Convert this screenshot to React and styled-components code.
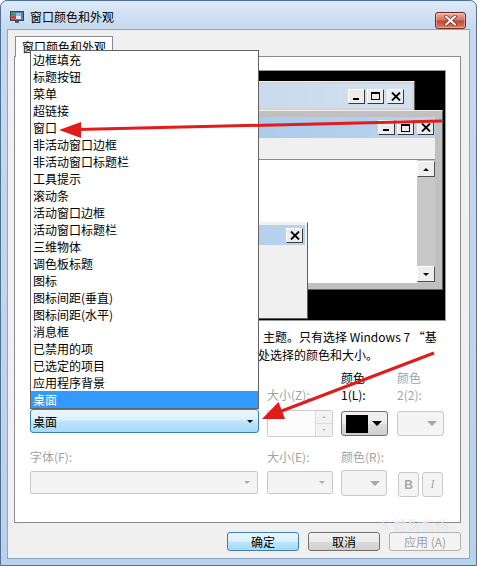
import React from 'react';
import styled, { createGlobalStyle } from 'styled-components';

const GlobalStyle = createGlobalStyle`
  html, body { margin: 0; padding: 0; background: #fff; }
  body {
    width: 477px; height: 566px; overflow: hidden;
    font-family: "Noto Sans CJK SC", "Noto Sans", "Liberation Sans", sans-serif;
    font-size: 12px; color: #000;
  }
`;

// outer aero frame
const Frame = styled.div`
  position: relative;
  width: 477px; height: 566px; box-sizing: border-box;
  border: 1px solid #4f6f95;
  border-radius: 7px 7px 0 0;
  background: linear-gradient(180deg, #dde9f6 0px, #c6daef 26px, #b9d1ea 100%);
  padding: 0 7px 7px;
  display: flex; flex-direction: column;
`;

const TitleBar = styled.div`
  height: 29px; flex: none;
  display: flex; align-items: center;
  padding-top: 2px; box-sizing: border-box;
`;

const IconSlot = styled.span`
  display: flex;
  margin-left: 2px;
`;

const TitleText = styled.span`
  margin-left: 5px; flex: 1;
  line-height: 16px;
`;

const CloseBtn = styled.div`
  align-self: flex-start;
  margin: 9px 3px 0 0;
  width: 31px; height: 17px; box-sizing: border-box;
  border: 1px solid #6e2a20; border-radius: 3px;
  background: linear-gradient(180deg, #eab0a2 0%, #d7725c 48%, #c4452e 52%, #d98066 100%);
  box-shadow: inset 0 0 0 1px rgba(255,255,255,0.35);
  display: flex; align-items: center; justify-content: center;
`;

const Client = styled.div`
  flex: 1;
  background: #f0f0f0;
  box-shadow: 0 0 0 1px #8ba6c6;
  display: flex; flex-direction: column;
`;

const TabStrip = styled.div`
  display: flex;
  padding: 6px 0 0 7px;
`;

const Tab = styled.div`
  position: relative; z-index: 1;
  height: 21px; box-sizing: border-box;
  padding: 0 6px;
  border: 1px solid #898c95; border-bottom: none;
  background: #fff;
  line-height: 19px;
  margin-bottom: -1px;
`;

const Panel = styled.div`
  margin-left: 6px;
  width: 447px; height: 467px; box-sizing: border-box;
  border: 1px solid #898c95;
  background: #fff;
  padding: 13px 0 0 15px;
`;

const Preview = styled.div`
  position: relative;
  width: 416px; height: 251px; box-sizing: border-box;
  background: #000;
  border: 1px solid #9a9a9a;
  overflow: hidden;
`;

// mini windows on the preview canvas
const MiniWin = styled.div`
  position: absolute;
  left: ${p => p.$x}px; top: ${p => p.$y}px;
  width: ${p => p.$w}px; height: ${p => p.$h}px;
  box-sizing: border-box;
  border: 1px solid;
  border-color: #eeeeee #5f5f5f #5f5f5f #eeeeee;
  background: ${p => p.$bg};
  padding: ${p => p.$pad};
  display: flex; flex-direction: column;
`;

const MiniTitle = styled.div`
  height: ${p => p.$h}px; flex: none;
  background: ${p => p.$active
    ? 'linear-gradient(90deg, #9fc0e7, #bad4ef)'
    : 'linear-gradient(90deg, #bccfe5, #d3e2f2)'};
  display: flex; align-items: center; justify-content: flex-end;
  padding-right: ${p => p.$pr}px;
  gap: 2px;
`;

const CapBtn = styled.div`
  width: 17px; height: 15px; box-sizing: border-box;
  border: 1px solid;
  border-color: #ffffff #3a3a3a #3a3a3a #ffffff;
  background: #ececec;
  display: flex; align-items: center; justify-content: center;
  margin-left: ${p => p.$gap || 0}px;
`;

const MenuStrip = styled.div`
  height: 21px; flex: none;
  background: #f0f0f0;
`;

const WinBody = styled.div`
  flex: 1;
  display: flex;
  background: #fff;
  border-top: 1px solid #8a8a8a;
  border-left: 1px solid #8a8a8a;
`;

const BodyFill = styled.div`flex: 1;`;

const ScrollBar = styled.div`
  width: 18px;
  background: #c8c8c8;
  display: flex; flex-direction: column; justify-content: space-between;
  padding: 1px 0;
`;

const ScrollArrow = styled.div`
  height: 16px; box-sizing: border-box;
  border: 1px solid;
  border-color: #ffffff #505050 #505050 #ffffff;
  background: #eeeeee;
  display: flex; align-items: center; justify-content: center;
`;

const MsgFill = styled.div`flex: 1; background: #f0f0f0;`;

const Note = styled.div`
  margin-top: 7px;
  line-height: 18px;
  white-space: nowrap;
`;

const NoteLine = styled.div`
  padding-left: ${p => p.$indent}px;
`;

const Settings = styled.div`
  display: grid;
  grid-template-columns: 229px 66px 48px 56px;
  grid-template-rows: 34px 28px 22px 27px;
  column-gap: 8px; row-gap: 6px;
  margin-top: 5px;
`;

const Label = styled.div`
  align-self: end;
  line-height: 17px;
  color: ${p => p.$disabled ? '#a2a2a2' : '#000'};
`;

const ComboWrap = styled.div`
  position: relative;
`;

const Combo = styled.div`
  height: 24px; box-sizing: border-box;
  border: 1px solid #3c7fb1; border-radius: 3px;
  background: linear-gradient(180deg, #eaf6fd 0%, #d9f0fc 45%, #bee6fd 50%, #a7d9f5 100%);
  display: flex; align-items: center; justify-content: space-between;
  padding: 0 5px 0 2px;
`;

const Caret = styled.span`
  width: 0; height: 0;
  border-left: ${p => p.$size}px solid transparent;
  border-right: ${p => p.$size}px solid transparent;
  border-top: ${p => p.$size}px solid ${p => p.$color || '#000'};
  margin-right: ${p => p.$mr || 0}px;
`;

const UpCaret = styled.span`
  width: 0; height: 0;
  border-left: ${p => p.$size}px solid transparent;
  border-right: ${p => p.$size}px solid transparent;
  border-bottom: ${p => p.$size}px solid ${p => p.$color || '#000'};
`;

const DropList = styled.div`
  position: absolute; z-index: 5;
  left: 0; bottom: 100%;
  width: 229px; box-sizing: border-box;
  border: 1px solid #646464;
  background: #fff;
`;

const ListItem = styled.div`
  height: 17px; line-height: 17px;
  padding-left: 2px;
  white-space: nowrap;
  background: ${p => p.$selected ? '#3399ff' : 'transparent'};
  color: ${p => p.$selected ? '#fff' : '#000'};
`;

const Spinner = styled.div`
  margin-top: 1px;
  height: 27px; box-sizing: border-box;
  border: 1px solid #cdcdcd; border-radius: 2px;
  background: #fbfbfb;
  display: flex; justify-content: flex-end;
`;

const SpinCol = styled.div`
  width: 16px;
  border-left: 1px solid #dcdcdc;
  display: flex; flex-direction: column;
`;

const SpinHalf = styled.div`
  flex: 1;
  display: flex; align-items: center; justify-content: center;
  border-top: ${p => p.$sep ? '1px solid #dcdcdc' : 'none'};
  background: #f2f2f2;
`;

const ColorBtn = styled.div`
  margin-top: ${p => p.$mt}px;
  width: ${p => p.$w}px; height: ${p => p.$h}px; box-sizing: border-box;
  border: 1px solid ${p => p.$disabled ? '#c9c9c9' : '#707070'};
  border-radius: 3px;
  background: ${p => p.$disabled
    ? '#f4f4f4'
    : 'linear-gradient(180deg, #f2f2f2 0%, #ebebeb 50%, #dddddd 51%, #cfcfcf 100%)'};
  display: flex; align-items: center;
  justify-content: ${p => p.$disabled ? 'flex-end' : 'space-between'};
  padding: 0 4px 0 4px;
`;

const Swatch = styled.div`
  width: 22px; height: 18px;
  background: #000;
`;

const DisabledCombo = styled.div`
  width: ${p => p.$w}px; height: 23px; box-sizing: border-box;
  border: 1px solid #c9c9c9; border-radius: 2px;
  background: #f4f4f4;
  display: flex; align-items: center; justify-content: flex-end;
  padding-right: 5px;
`;

const StyleBtns = styled.div`
  display: flex; gap: 3px;
  margin: 1px 0 0 1px;
`;

const StyleBtn = styled.div`
  width: 21px; height: 25px; box-sizing: border-box;
  border: 1px solid #c9c9c9; border-radius: 3px;
  background: #f4f4f4;
  color: #a8a8a8;
  display: flex; align-items: center; justify-content: center;
  font-family: ${p => p.$italic ? '"Liberation Serif", serif' : '"Liberation Sans", sans-serif'};
  font-weight: ${p => p.$italic ? 'normal' : 'bold'};
  font-style: ${p => p.$italic ? 'italic' : 'normal'};
  font-size: 12px;
`;

const ButtonRow = styled.div`
  display: flex; justify-content: flex-end; gap: 9px;
  margin-top: 9px; padding-right: 8px;
`;

const DlgButton = styled.div`
  width: 72px; height: 19px; box-sizing: border-box;
  border-radius: 3px;
  display: flex; align-items: center; justify-content: center;
  ${p => p.$variant === 'default' && `
    border: 1px solid #3c7fb1;
    background: linear-gradient(180deg, #eaf6fd 0%, #d9f0fc 50%, #bee6fd 51%, #a7d9f5 100%);
    color: #000;
  `}
  ${p => p.$variant === 'normal' && `
    border: 1px solid #707070;
    background: linear-gradient(180deg, #f2f2f2 0%, #ebebeb 50%, #dddddd 51%, #cfcfcf 100%);
    color: #000;
  `}
  ${p => p.$variant === 'disabled' && `
    border: 1px solid #adb2b5;
    background: #f4f4f4;
    color: #a0a0a0;
  `}
`;

const Annotations = styled.svg`
  position: absolute; left: 0; top: 0;
  width: 477px; height: 566px;
  pointer-events: none;
  z-index: 20;
`;

const Watermark = styled.div`
  position: absolute; z-index: 21;
  left: 380px; top: 514px;
  font-size: 13px; letter-spacing: 1px;
  color: rgba(255,255,255,0.75);
  text-shadow: 0 0 1px rgba(0,0,0,0.18);
`;

const items = [
  '边框填充', '标题按钮', '菜单', '超链接', '窗口', '非活动窗口边框', '非活动窗口标题栏',
  '工具提示', '滚动条', '活动窗口边框', '活动窗口标题栏', '三维物体', '调色板标题', '图标',
  '图标间距(垂直)', '图标间距(水平)', '消息框', '已禁用的项', '已选定的项目', '应用程序背景', '桌面',
];

const AppIcon = () => (
  <svg width="15" height="15" viewBox="0 0 15 15">
    <rect x="0.5" y="2.5" width="13" height="9" fill="#5b7fa8" stroke="#2e4866" />
    <rect x="2" y="4" width="4" height="3" fill="#3aa35a" />
    <rect x="6" y="4" width="5" height="3" fill="#7fc4ef" />
    <rect x="2" y="7" width="4" height="3" fill="#d9412e" />
    <rect x="6" y="7" width="5" height="3" fill="#e8e8e8" />
    <rect x="5" y="12" width="4" height="2" fill="#4b5e73" />
  </svg>
);

const CloseGlyph = () => (
  <svg width="13" height="11" viewBox="0 0 13 11">
    <path d="M2 1.5 L11 9.5 M11 1.5 L2 9.5" stroke="#5a1d14" strokeWidth="3.4" strokeLinecap="round" />
    <path d="M2 1.5 L11 9.5 M11 1.5 L2 9.5" stroke="#fff" strokeWidth="2.2" strokeLinecap="round" />
  </svg>
);

const MinGlyph = () => (
  <svg width="9" height="9" viewBox="0 0 9 9"><rect x="1" y="6" width="6" height="2" fill="#000" /></svg>
);
const MaxGlyph = () => (
  <svg width="11" height="10" viewBox="0 0 11 10">
    <rect x="1.5" y="1.5" width="8" height="7" fill="none" stroke="#000" />
    <rect x="1" y="1" width="9" height="2" fill="#000" />
  </svg>
);
const XGlyph = () => (
  <svg width="10" height="9" viewBox="0 0 10 9">
    <path d="M1 0.5 L9 8.5 M9 0.5 L1 8.5" stroke="#000" strokeWidth="1.8" />
  </svg>
);

const Captions = () => (
  <>
    <CapBtn><MinGlyph /></CapBtn>
    <CapBtn><MaxGlyph /></CapBtn>
    <CapBtn $gap={1}><XGlyph /></CapBtn>
  </>
);

export default function App() {
  return (
    <>
      <GlobalStyle />
      <Frame>
        <TitleBar>
          <IconSlot><AppIcon /></IconSlot>
          <TitleText>窗口颜色和外观</TitleText>
          <CloseBtn><CloseGlyph /></CloseBtn>
        </TitleBar>

        <Client>
          <TabStrip>
            <Tab>窗口颜色和外观</Tab>
          </TabStrip>
          <Panel>
            <Preview>
              <MiniWin $x={14} $y={10} $w={370} $h={120} $bg="#d4d4d4" $pad="2px">
                <MiniTitle $h={24} $pr={8}><Captions /></MiniTitle>
              </MiniWin>
              <MiniWin $x={24} $y={39} $w={388} $h={180} $bg="#c0c0c0" $pad="6px 7px 6px 6px">
                <MiniTitle $h={21} $pr={1} $active><Captions /></MiniTitle>
                <MenuStrip />
                <WinBody>
                  <BodyFill />
                  <ScrollBar>
                    <ScrollArrow><UpCaret $size={3.5} /></ScrollArrow>
                    <ScrollArrow><Caret $size={3.5} /></ScrollArrow>
                  </ScrollBar>
                </WinBody>
              </MiniWin>
              <MiniWin $x={31} $y={151} $w={246} $h={97} $bg="#f0f0f0" $pad="2px">
                <MiniTitle $h={20} $pr={2} $active><CapBtn><XGlyph /></CapBtn></MiniTitle>
                <MsgFill />
              </MiniWin>
            </Preview>

            <Note>
              <NoteLine $indent={233}>主题。只有选择 Windows 7 “基</NoteLine>
              <NoteLine $indent={228}>处选择的颜色和大小。</NoteLine>
            </Note>

            <Settings>
              <div />
              <Label $disabled>大小(Z):</Label>
              <Label>颜色<br />1(L):</Label>
              <Label $disabled>颜色<br />2(2):</Label>

              <ComboWrap>
                <DropList>
                  {items.map((t, i) => (
                    <ListItem key={t} $selected={i === items.length - 1}>{t}</ListItem>
                  ))}
                </DropList>
                <Combo>
                  <span>桌面</span>
                  <Caret $size={3.5} />
                </Combo>
              </ComboWrap>
              <Spinner>
                <SpinCol>
                  <SpinHalf><UpCaret $size={2.5} $color="#b8b8b8" /></SpinHalf>
                  <SpinHalf $sep><Caret $size={2.5} $color="#b8b8b8" /></SpinHalf>
                </SpinCol>
              </Spinner>
              <ColorBtn $mt={2} $w={47} $h={25}>
                <Swatch />
                <Caret $size={5} $mr={1} />
              </ColorBtn>
              <ColorBtn $mt={2} $w={47} $h={25} $disabled>
                <Caret $size={5} $color="#a8a8a8" $mr={2} />
              </ColorBtn>

              <Label $disabled>字体(F):</Label>
              <Label $disabled>大小(E):</Label>
              <Label $disabled>颜色(R):</Label>
              <div />

              <DisabledCombo $w={228}><Caret $size={3} $color="#b0b0b0" $mr={2} /></DisabledCombo>
              <DisabledCombo $w={66}><Caret $size={3} $color="#b0b0b0" $mr={2} /></DisabledCombo>
              <ColorBtn $mt={-1} $w={46} $h={26} $disabled>
                <Caret $size={5} $color="#a8a8a8" $mr={2} />
              </ColorBtn>
              <StyleBtns>
                <StyleBtn>B</StyleBtn>
                <StyleBtn $italic>I</StyleBtn>
              </StyleBtns>
            </Settings>
          </Panel>

          <ButtonRow>
            <DlgButton $variant="default">确定</DlgButton>
            <DlgButton $variant="normal">取消</DlgButton>
            <DlgButton $variant="disabled">应用 (A)</DlgButton>
          </ButtonRow>
        </Client>

        <Annotations viewBox="0 0 477 566">
          <path d="M441 120 L76 128.5" stroke="#e21b1b" strokeWidth="3" fill="none" />
          <polygon points="58,129 80,121 80,137" fill="#e21b1b" />
          <path d="M433 352 L278 411" stroke="#e21b1b" strokeWidth="3" fill="none" />
          <polygon points="261,418 277.5,401 284,418" fill="#e21b1b" />
        </Annotations>
        <Watermark>S 搜狗指南</Watermark>
      </Frame>
    </>
  );
}
